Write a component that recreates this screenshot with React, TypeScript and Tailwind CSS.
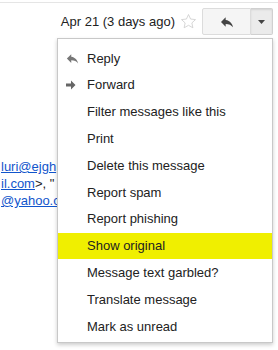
import { ReactNode } from "react";

interface MenuItem {
    label: string;
    icon?: ReactNode;
    active?: boolean;
}

function ReplyIcon({ className }: { className?: string }) {
    return (
        <svg viewBox="0 0 24 24" className={className} fill="currentColor">
            <path d="M10 9V5l-7 7 7 7v-4.1c5 0 8.5 1.6 11 5.1-1-5-4-10-11-11z" />
        </svg>
    );
}

function ForwardIcon({ className }: { className?: string }) {
    return (
        <svg viewBox="0 0 12 12" className={className} fill="currentColor">
            <path d="M1 4.5h5V1.5l4.5 4.5L6 10.5V7.5H1z" />
        </svg>
    );
}

const items: MenuItem[] = [
    { label: "Reply", icon: <ReplyIcon className="w-[15px] h-[15px] text-[#777]" /> },
    { label: "Forward", icon: <ForwardIcon className="w-[12px] h-[12px] text-[#666]" /> },
    { label: "Filter messages like this" },
    { label: "Print" },
    { label: "Delete this message" },
    { label: "Report spam" },
    { label: "Report phishing" },
    { label: "Show original", active: true },
    { label: "Message text garbled?" },
    { label: "Translate message" },
    { label: "Mark as unread" },
];

export default function App() {
    return (
        <div
            className="relative w-[278px] h-[350px] bg-white overflow-hidden text-[13px] text-[#222]"
            style={{ fontFamily: '"Liberation Sans", Arial, sans-serif' }}
        >
            {/* top rule */}
            <div className="h-[2px]" />
            <div className="h-px bg-[#e5e5e5]" />

            {/* header row */}
            <div className="flex items-center justify-end pr-[5px] pt-[5px]">
                <span className="leading-none">Apr 21 (3 days ago)</span>
                <svg viewBox="0 0 20 20" className="w-[17px] h-[17px] ml-[5px] mr-[5px]">
                    <path
                        d="M10 1.8l2.45 5.3 5.8.65-4.3 3.95 1.2 5.7L10 14.5l-5.15 2.9 1.2-5.7-4.3-3.95 5.8-.65z"
                        fill="none"
                        stroke="#cfcfcf"
                        strokeWidth="1"
                    />
                </svg>
                <div className="flex h-[27px]">
                    <button className="w-[49px] h-full flex items-center justify-center bg-[#f5f5f5] border border-[#dcdcdc] rounded-l-[2px]">
                        <ReplyIcon className="w-[16px] h-[16px] text-[#444]" />
                    </button>
                    <button className="w-[22px] h-full flex items-center justify-center bg-[#ebebeb] border border-l-0 border-[#d0d0d0] rounded-r-[2px] shadow-[inset_0_1px_2px_rgba(0,0,0,0.1)]">
                        <svg viewBox="0 0 7 4" className="w-[7px] h-[4px]">
                            <path d="M0 0h7L3.5 4z" fill="#444" />
                        </svg>
                    </button>
                </div>
            </div>

            {/* message text, cut off by the menu */}
            <div className="absolute left-[1px] top-[158px] w-[56px] overflow-hidden leading-[17px] whitespace-nowrap">
                <div>
                    <span className="text-[#1155cc] underline">luri@ejgh</span>
                </div>
                <div>
                    <span className="text-[#1155cc] underline">il.com</span>&gt;, "
                </div>
                <div>
                    <span className="text-[#1155cc] underline">@yahoo.c</span>
                </div>
            </div>

            {/* dropdown menu */}
            <div className="absolute left-[57px] top-[38px] w-[216px] bg-white border border-[#c8c8c8] shadow-[0_2px_4px_rgba(0,0,0,0.2)] pt-[6px] pb-[2px]">
                {items.map((item) => (
                    <div
                        key={item.label}
                        className={`flex items-center h-[26.8px] pl-[7px] ${item.active ? "bg-[#f0ef00]" : ""}`}
                    >
                        <div className="w-[22px] flex items-center">{item.icon}</div>
                        <span>{item.label}</span>
                    </div>
                ))}
            </div>
        </div>
    );
}
